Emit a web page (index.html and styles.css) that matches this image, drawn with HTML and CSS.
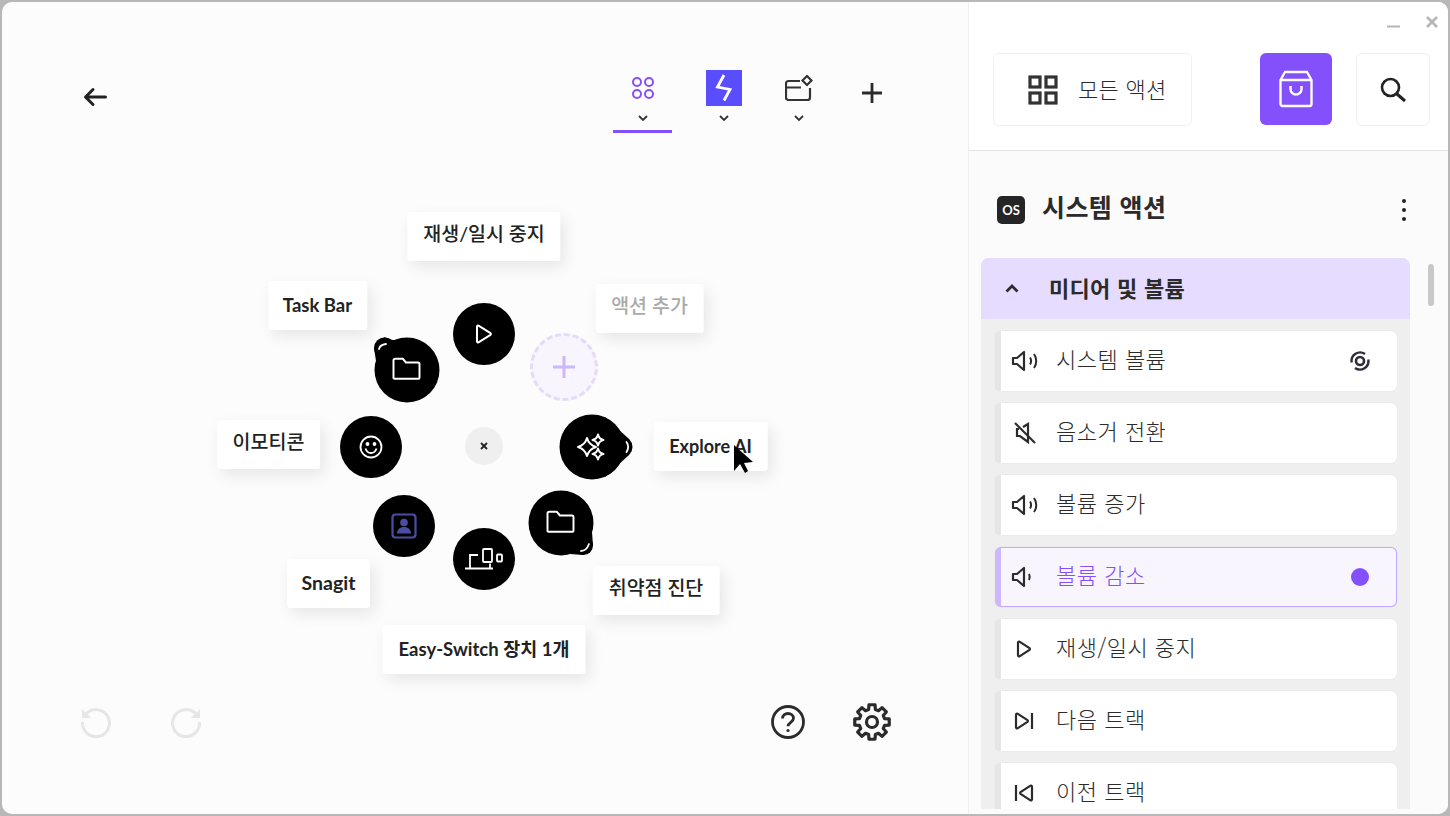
FILE: index.html
```html
<!DOCTYPE html>
<html lang="ko">
<head>
  <meta charset="UTF-8">
  <meta name="viewport" content="width=device-width, initial-scale=1.0">
  <title>액션 링</title>
  <link rel="stylesheet" href="styles.css">
</head>
<body>
  <svg class="defs" width="0" height="0" aria-hidden="true">
    <symbol id="speaker" viewBox="0 0 26 24">
      <path d="M2 9h4l7-6v18l-7-6H2z" fill="none" stroke="currentColor" stroke-width="2.200" stroke-linejoin="round"/>
    </symbol>
    <symbol id="folder" viewBox="0 0 28 24">
      <path d="M2 4a1.500 1.500 0 0 1 1.500-1.500h7l3 3.500h11a1.500 1.500 0 0 1 1.500 1.500v12a1.500 1.500 0 0 1-1.500 1.500h-21A1.500 1.500 0 0 1 2 20.500z" fill="none" stroke="#fff" stroke-width="1.800" stroke-linejoin="round"/>
    </symbol>
  </svg>

  <div class="window">
    <main class="editor">
      <header class="topbar">
        <button class="back" aria-label="뒤로">
          <svg width="24" height="20" viewBox="0 0 24 20"><path d="M22.500 10H2.500M10 2.500L2.500 10l7.500 7.500" fill="none" stroke="#222" stroke-width="3" stroke-linecap="round" stroke-linejoin="round"/></svg>
        </button>
        <div class="tab tab-active">
          <svg width="22" height="22" viewBox="0 0 22 22" fill="none" stroke="#8350fb" stroke-width="2"><circle cx="5" cy="5" r="4"/><circle cx="17" cy="5" r="4"/><circle cx="5" cy="17" r="4"/><circle cx="17" cy="17" r="4"/></svg>
          <svg class="chev" width="10" height="6" viewBox="0 0 10 6"><path d="M1 1l4 4 4-4" fill="none" stroke="#333" stroke-width="1.800"/></svg>
        </div>
        <div class="tab tab-bolt">
          <span class="bolt"><svg width="36" height="36" viewBox="0 0 36 36"><path d="M18 5l-6.500 12 12.500 2.500L18 30.500" fill="none" stroke="#fff" stroke-width="2.800"/></svg></span>
          <svg class="chev" width="10" height="6" viewBox="0 0 10 6"><path d="M1 1l4 4 4-4" fill="none" stroke="#333" stroke-width="1.800"/></svg>
        </div>
        <div class="tab tab-app">
          <svg width="28" height="26" viewBox="0 0 28 26" fill="none" stroke="#333" stroke-width="2.200"><path d="M15 6H3.500A2.500 2.500 0 0 0 1 8.500v14A2.500 2.500 0 0 0 3.500 25h19a2.500 2.500 0 0 0 2.500-2.500V13M1 12.500h15"/><path d="M22 1l4.500 4.500L22 10l-4.500-4.500z"/></svg>
          <svg class="chev" width="10" height="6" viewBox="0 0 10 6"><path d="M1 1l4 4 4-4" fill="none" stroke="#333" stroke-width="1.800"/></svg>
        </div>
        <button class="add-tab" aria-label="추가">
          <svg width="20" height="20" viewBox="0 0 20 20"><path d="M10 0v20M0 10h20" stroke="#2b2b2b" stroke-width="2.800"/></svg>
        </button>
      </header>

      <section class="wheel">
        <span class="label label-ko label-play">재생/일시 중지</span>
        <span class="label label-task">Task Bar</span>
        <span class="label label-ko label-add">액션 추가</span>
        <span class="label label-ko label-emoji">이모티콘</span>
        <span class="label label-ai">Explore AI</span>
        <span class="label label-snagit">Snagit</span>
        <span class="label label-ko label-scan">취약점 진단</span>
        <span class="label label-switch">Easy-Switch 장치 1개</span>

        <span class="node node-play">
          <svg width="18" height="20" viewBox="0 0 18 20"><path d="M2 2.500v15a1 1 0 0 0 1.500.8l12-7.500a1 1 0 0 0 0-1.600l-12-7.500A1 1 0 0 0 2 2.500z" fill="none" stroke="#fff" stroke-width="2"/></svg>
        </span>
        <span class="node node-emoji">
          <svg width="24" height="24" viewBox="0 0 24 24" fill="none" stroke="#fff" stroke-width="1.800"><circle cx="12" cy="12" r="10.500"/><path d="M6.500 13.500c1 3 3 4.500 5.500 4.500s4.500-1.500 5.500-4.500"/><circle cx="8.500" cy="9" r="1" fill="#fff"/><circle cx="15.500" cy="9" r="1" fill="#fff"/></svg>
        </span>
        <span class="node node-person">
          <svg width="26" height="26" viewBox="0 0 26 26"><rect x="1.500" y="1.500" width="23" height="23" rx="3" fill="none" stroke="#4b4da3" stroke-width="2.200"/><circle cx="13" cy="9.500" r="3.800" fill="#4b4da3"/><path d="M6 20.500c0-4 3-6.500 7-6.500s7 2.500 7 6.500z" fill="#4b4da3"/></svg>
        </span>
        <span class="node node-switch">
          <svg width="38" height="22" viewBox="0 0 38 22" fill="none" stroke="#fff" stroke-width="1.800"><path d="M0 20.500h28M5 20.500V7h8M25 20.500v-5"/><rect x="18" y="1" width="9" height="13" rx="1"/><rect x="32" y="6.500" width="5" height="7" rx="1"/></svg>
        </span>

        <svg class="blob blob-folder" width="66" height="68" viewBox="0 0 66 68">
          <circle cx="33" cy="35" r="32.500"/>
          <circle cx="10.500" cy="13" r="10.500"/>
          <path d="M10 2.500C16 2.500 18 7 24 4L2 26 0 13z"/>
          <path d="M5 14c.5-2.500 3-4.500 7-5" fill="none" stroke="#fff" stroke-width="1.800" stroke-linecap="round"/>
          <use href="#folder" x="17" y="21" width="31" height="26"/>
        </svg>
        <svg class="blob blob-ai" width="74" height="66" viewBox="0 0 74 66">
          <circle cx="33" cy="33" r="32.500"/>
          <circle cx="63" cy="33" r="10.500"/>
          <path d="M46 3L70 25 70 41 46 63z"/>
          <path d="M67.500 28c2 3 2 7 0 10" fill="none" stroke="#fff" stroke-width="1.800" stroke-linecap="round"/>
          <path d="M28 24Q30 31 37 33 30 35 28 42 26 35 19 33 26 31 28 24zM39 20.500Q40 25 44.500 26 40 27 39 31.500 38 27 33.500 26 38 25 39 20.500zM39 34.500Q40 39 44.500 40 40 41 39 45.500 38 41 33.500 40 38 39 39 34.500z" fill="none" stroke="#fff" stroke-width="2" stroke-linejoin="round"/>
        </svg>
        <svg class="blob blob-folder2" width="66" height="66" viewBox="0 0 66 66">
          <circle cx="33" cy="33" r="32.500"/>
          <circle cx="55.500" cy="55.500" r="9.500"/>
          <path d="M64 42L65 55.500 55.500 65 42 64z"/>
          <path d="M53 61c3.500 0 6.500-3 8-7" fill="none" stroke="#fff" stroke-width="1.800" stroke-linecap="round"/>
          <use href="#folder" x="17" y="19" width="31" height="26"/>
        </svg>

        <span class="slot">
          <svg width="24" height="24" viewBox="0 0 24 24"><path d="M12 1v22M1 12h22" stroke="#cdb8fb" stroke-width="3"/></svg>
        </span>
        <button class="close-wheel" aria-label="닫기">
          <svg width="8" height="8" viewBox="0 0 8 8"><path d="M1 1l6 6M7 1L1 7" stroke="#222" stroke-width="1.800"/></svg>
        </button>

        <svg class="cursor" width="22" height="30" viewBox="0 0 22 30"><path d="M1 1v26l6-7 5 9 3-2-4-8 9-1z" fill="#000"/></svg>
      </section>

      <footer class="bottombar">
        <svg class="undo" width="32" height="32" viewBox="0 0 32 32" fill="none" stroke="#e6e6e6" stroke-width="3"><path d="M6 8a13.500 13.500 0 1 1-3.500 8"/><path d="M2 3v9h9" fill="#e6e6e6" stroke="none"/></svg>
        <svg class="redo" width="32" height="32" viewBox="0 0 32 32" fill="none" stroke="#e6e6e6" stroke-width="3"><path d="M26 8a13.500 13.500 0 1 0 3.500 8"/><path d="M30 3v9h-9" fill="#e6e6e6" stroke="none"/></svg>
        <svg class="help" width="36" height="36" viewBox="0 0 36 36" fill="none" stroke="#2b2b2b" stroke-width="2.800"><circle cx="18" cy="18" r="15.500"/><path d="M12.500 14.500c0-3 2.500-5 5.500-5s5.500 2 5.500 4.800c0 4-5.500 4-5.500 8"/><circle cx="18" cy="26.500" r="1.600" fill="#2b2b2b" stroke="none"/></svg>
        <svg class="gear" width="40" height="40" viewBox="0 0 40 40" fill="none" stroke="#2b2b2b" stroke-width="3.200" stroke-linejoin="round">
          <g transform="translate(20 20)">
            <polygon points="3.040,-17.230 3.360,-12.560 6.500,-11.260 10.040,-14.340 14.340,-10.040 11.260,-6.500 12.560,-3.360 17.230,-3.040 17.230,3.040 12.560,3.360 11.260,6.500 14.340,10.040 10.040,14.340 6.500,11.260 3.360,12.560 3.040,17.230 -3.040,17.230 -3.360,12.560 -6.500,11.260 -10.040,14.340 -14.340,10.040 -11.260,6.500 -12.560,3.360 -17.230,3.040 -17.230,-3.040 -12.560,-3.360 -11.260,-6.500 -14.340,-10.040 -10.040,-14.340 -6.500,-11.260 -3.360,-12.560 -3.040,-17.230"/>
            <circle r="5.500"/>
          </g>
        </svg>
      </footer>
    </main>

    <aside class="panel">
      <header class="panel-head">
        <div class="win-controls">
          <svg class="win-min" width="16" height="3" viewBox="0 0 16 3"><path d="M0 1.500h13" stroke="#b5b5b5" stroke-width="2"/></svg>
          <svg width="14" height="14" viewBox="0 0 14 14"><path d="M2 2l10 10M12 2L2 12" stroke="#b5b5b5" stroke-width="2.600"/></svg>
        </div>
        <div class="head-row">
          <button class="all-actions">
            <svg width="30" height="30" viewBox="0 0 30 30" fill="none" stroke="#333" stroke-width="3.200"><rect x="2" y="2" width="10" height="10"/><rect x="18" y="2" width="10" height="10"/><rect x="2" y="18" width="10" height="10"/><rect x="18" y="18" width="10" height="10"/></svg>
            <span class="all-actions-text">모든 액션</span>
          </button>
          <button class="shop" aria-label="스토어">
            <svg width="34" height="38" viewBox="0 0 34 38" fill="none" stroke="#fff" stroke-width="2.400" stroke-linejoin="round"><path d="M1.500 10L6 2h22l4.500 8v24a2 2 0 0 1-2 2h-27a2 2 0 0 1-2-2z"/><path d="M1.500 10h31M11.500 16v3a5.500 5.500 0 0 0 11 0v-3"/></svg>
          </button>
          <button class="search" aria-label="검색">
            <svg width="26" height="26" viewBox="0 0 26 26" fill="none" stroke="#222"><circle cx="10.500" cy="10.500" r="8.500" stroke-width="2.600"/><path d="M17 17l8 7" stroke-width="3"/></svg>
          </button>
        </div>
      </header>

      <div class="panel-body">
        <div class="section-title">
          <span class="os-badge">OS</span>
          <h2>시스템 액션</h2>
          <span class="dots"><i></i><i></i><i></i></span>
        </div>

        <div class="accordion">
          <div class="accordion-head">
            <svg width="14" height="9" viewBox="0 0 14 9"><path d="M1.500 7.500L7 2l5.500 5.500" fill="none" stroke="#2b2b2b" stroke-width="2.800"/></svg>
            <span class="accordion-title">미디어 및 볼륨</span>
          </div>
          <ul class="action-list">
            <li class="action">
              <span class="action-icon">
                <svg width="28" height="24" viewBox="0 0 28 24"><use href="#speaker" width="26" height="24"/><path d="M19 8.500c1.300 2 1.300 5 0 7M23 5c3 4 3 10 0 14" fill="none" stroke="currentColor" stroke-width="2"/></svg>
              </span>
              <span class="action-name">시스템 볼륨</span>
              <svg class="dial" width="20" height="20" viewBox="0 0 20 20" fill="none" stroke="#2f2b3a"><circle cx="10" cy="10" r="4" stroke-width="2.600"/><path d="M1.700 11.500A8.500 8.500 0 0 1 15 3.100M18.300 8.500A8.500 8.500 0 0 1 5 16.900" stroke-width="2.400"/></svg>
            </li>
            <li class="action">
              <span class="action-icon">
                <svg width="28" height="24" viewBox="0 0 28 24" fill="none" stroke="currentColor" stroke-width="2.200"><path d="M8 8H6v7h3l8 6V3l-5 3"/><path d="M4 2l20 20"/></svg>
              </span>
              <span class="action-name">음소거 전환</span>
            </li>
            <li class="action">
              <span class="action-icon">
                <svg width="28" height="24" viewBox="0 0 28 24"><use href="#speaker" width="26" height="24"/><path d="M19 8.500c1.300 2 1.300 5 0 7M23 5c3 4 3 10 0 14" fill="none" stroke="currentColor" stroke-width="2"/></svg>
              </span>
              <span class="action-name">볼륨 증가</span>
            </li>
            <li class="action action-active">
              <span class="action-icon">
                <svg width="28" height="24" viewBox="0 0 28 24"><use href="#speaker" width="26" height="24"/><path d="M18 9c.9 1.800.9 4 0 6" fill="none" stroke="currentColor" stroke-width="2"/></svg>
              </span>
              <span class="action-name">볼륨 감소</span>
              <span class="assigned"></span>
            </li>
            <li class="action">
              <span class="action-icon">
                <svg width="28" height="24" viewBox="0 0 28 24"><path d="M7 5.500v13a1 1 0 0 0 1.500.8l10-6.500a1 1 0 0 0 0-1.600l-10-6.500A1 1 0 0 0 7 5.500z" fill="none" stroke="currentColor" stroke-width="2.200"/></svg>
              </span>
              <span class="action-name">재생/일시 중지</span>
            </li>
            <li class="action">
              <span class="action-icon">
                <svg width="28" height="24" viewBox="0 0 28 24" fill="none" stroke="currentColor" stroke-width="2.200"><path d="M5 5.500v13a1 1 0 0 0 1.500.8l10-6.500a1 1 0 0 0 0-1.600l-10-6.500A1 1 0 0 0 5 5.500zM21 4v16"/></svg>
              </span>
              <span class="action-name">다음 트랙</span>
            </li>
            <li class="action">
              <span class="action-icon">
                <svg width="28" height="24" viewBox="0 0 28 24" fill="none" stroke="currentColor" stroke-width="2.200"><path d="M21 5.500v13a1 1 0 0 1-1.500.8l-10-6.500a1 1 0 0 1 0-1.600l10-6.500a1 1 0 0 1 1.500.8zM5 4v16"/></svg>
              </span>
              <span class="action-name">이전 트랙</span>
            </li>
          </ul>
        </div>
        <span class="scroll-thumb"></span>
      </div>
    </aside>
  </div>
</body>
</html>
```

FILE: styles.css
```css
* {
  box-sizing: border-box;
}

html, body {
  height: 100%;
}

body {
  margin: 0;
  padding: 2px;
  background: #b8b8b8;
  font-family: "Noto Sans CJK KR", "Noto Sans", sans-serif;
  color: #2b2b2b;
  overflow: hidden;
}

.defs {
  position: absolute;
}

button {
  border: 0;
  padding: 0;
  background: none;
  font: inherit;
  color: inherit;
}

.window {
  display: flex;
  height: 100%;
  border-radius: 10px;
  overflow: hidden;
  background: #fcfcfc;
}

/* left side: the ring editor */
.editor {
  flex: 1;
  display: flex;
  flex-direction: column;
  min-width: 0;
}

.topbar {
  display: flex;
  align-items: flex-end;
  height: 131px;
  padding-left: 81px;
}

.back {
  display: flex;
  margin: 0 auto 26px 0;
}

.tab {
  display: flex;
  flex-direction: column;
  align-items: center;
  position: relative;
  height: 71px;
}

.tab .chev {
  position: absolute;
  top: 53px;
}

.tab-active {
  width: 59px;
  padding-top: 15px;
  border-bottom: 3px solid #8350fb;
}

.tab-bolt {
  width: 36px;
  margin-left: 34px;
  padding-top: 8px;
}

.bolt {
  display: flex;
  width: 36px;
  height: 36px;
  background: #5a4dff;
}

.tab-app {
  width: 28px;
  margin-left: 43px;
  padding-top: 13px;
}

.add-tab {
  display: flex;
  margin: 0 86px 30px 49px;
}

.wheel {
  position: relative;
  flex: 1;
}

.label {
  position: absolute;
  transform: translateX(-50%);
  height: 49px;
  padding: 0 16px 2px;
  display: flex;
  align-items: center;
  white-space: nowrap;
  background: #fff;
  border-radius: 3px;
  box-shadow: 4px 6px 16px rgba(0, 0, 0, 0.09);
  font-family: "Lato", "Noto Sans CJK KR", sans-serif;
  font-size: 18px;
  font-weight: 700;
  color: #222;
}

.label-ko {
  padding: 0 16px 8px;
  font-size: 19.500px;
  font-weight: 500;
}

.label-play { left: 482px; top: 79px; }
.label-task { left: 315.500px; top: 148px; padding: 0 15px 2px; font-size: 18.500px; }
.label-add { left: 647.500px; top: 151px; color: #aaa; }
.label-emoji { left: 266.500px; top: 287px; }
.label-ai { left: 708.500px; top: 289px; }
.label-snagit { left: 326.500px; top: 426px; padding: 0 15px 2px; font-size: 19.500px; }
.label-scan { left: 654px; top: 433px; }
.label-switch { left: 482px; top: 492px; padding-bottom: 4px; font-size: 18.500px; }

.node {
  position: absolute;
  display: flex;
  align-items: center;
  justify-content: center;
  width: 62px;
  height: 62px;
  border-radius: 50%;
  background: #000;
}

.node-play { left: 451px; top: 170px; }
.node-emoji { left: 338px; top: 283px; }
.node-person { left: 371px; top: 362px; }
.node-switch { left: 451px; top: 395px; }

.blob {
  position: absolute;
  fill: #000;
}

.blob-folder { left: 372px; top: 202px; }
.blob-ai { left: 557px; top: 281px; }
.blob-folder2 { left: 526px; top: 357px; }

.slot {
  position: absolute;
  left: 528px;
  top: 200px;
  width: 68px;
  height: 68px;
  display: flex;
  align-items: center;
  justify-content: center;
  border-radius: 50%;
  border: 3px dashed #e4dbfb;
  background: #f8f5ff;
}

.close-wheel {
  position: absolute;
  left: 463px;
  top: 294px;
  width: 38px;
  height: 38px;
  display: flex;
  align-items: center;
  justify-content: center;
  border-radius: 50%;
  background: #efefef;
}

.cursor {
  position: absolute;
  left: 731px;
  top: 311px;
}

.bottombar {
  display: flex;
  align-items: center;
  height: 76px;
  margin-bottom: 54px;
  padding-left: 78px;
}

.redo {
  margin-left: 58px;
}

.help {
  margin-left: 568px;
}

.gear {
  margin-left: 46px;
}

/* right side: the action panel */
.panel {
  flex: none;
  width: 480px;
  display: flex;
  flex-direction: column;
  border-left: 1px solid #f0f0f0;
  background: #fbfbfb;
}

.panel-head {
  height: 149px;
  background: #fff;
  border-bottom: 1px solid #e4e4e4;
}

.win-controls {
  display: flex;
  justify-content: flex-end;
  align-items: center;
  gap: 22px;
  height: 40px;
  padding: 0 9px 0 0;
}

.win-min {
  margin-top: 8px;
}

.head-row {
  display: flex;
  align-items: flex-start;
  padding: 11px 18px 0 24px;
}

.all-actions {
  display: flex;
  align-items: center;
  gap: 20px;
  width: 199px;
  height: 73px;
  padding-left: 34px;
  border: 1px solid #f0f0f0;
  border-radius: 6px;
}

.all-actions-text {
  padding-bottom: 4px;
  font-size: 22px;
  font-weight: 300;
  letter-spacing: 0.3px;
}

.shop {
  display: flex;
  align-items: center;
  justify-content: center;
  width: 72px;
  height: 72px;
  margin-left: 68px;
  border-radius: 6px;
  background: #8350fb;
}

.search {
  display: flex;
  align-items: center;
  justify-content: center;
  width: 74px;
  height: 73px;
  margin-left: 24px;
  border: 1px solid #f0f0f0;
  border-radius: 6px;
}

.panel-body {
  position: relative;
  height: 658px;
  padding: 0 38px 0 12px;
  overflow: hidden;
}

.section-title {
  display: flex;
  align-items: center;
  height: 107px;
  padding: 10px 0 0 16px;
}

.os-badge {
  display: flex;
  align-items: center;
  justify-content: center;
  width: 28px;
  height: 28px;
  border-radius: 5px;
  background: #252525;
  color: #fff;
  font-family: "Lato", sans-serif;
  font-size: 13px;
  font-weight: 700;
}

.section-title h2 {
  margin: 0 0 7px 17px;
  font-size: 25px;
  font-weight: 700;
  letter-spacing: 0.4px;
}

.dots {
  display: flex;
  flex-direction: column;
  gap: 5px;
  margin-left: auto;
  margin-right: 4px;
}

.dots i {
  width: 4px;
  height: 4px;
  border-radius: 50%;
  background: #222;
}

.accordion {
  border-radius: 8px 8px 0 0;
  background: #efefef;
  overflow: hidden;
}

.accordion-head {
  display: flex;
  align-items: center;
  gap: 30px;
  height: 61px;
  padding-left: 24px;
  background: #e5dcff;
}

.accordion-title {
  padding-bottom: 4px;
  font-size: 22px;
  font-weight: 700;
  letter-spacing: 0.3px;
}

.action-list {
  list-style: none;
  margin: 0;
  padding: 12px 13px 0 14px;
}

.action {
  display: flex;
  align-items: center;
  height: 60px;
  margin-bottom: 12px;
  padding: 0 27px 0 10px;
  border-left: 6px solid #e6e6e6;
  border-radius: 6px;
  background: #fff;
  box-shadow: 0 0 1px rgba(0, 0, 0, 0.12);
}

.action-icon {
  display: flex;
  margin-right: 17px;
}

.action-name {
  flex: 1;
  padding-bottom: 7px;
  font-size: 22px;
  font-weight: 300;
  letter-spacing: 0.5px;
  line-height: 1;
}

.action-active {
  border: 1px solid #c4a8ff;
  border-left: 6px solid #cdb8ff;
  background: #f8f5ff;
}

.action-active .action-name {
  color: #8350fb;
}

.assigned {
  width: 18px;
  height: 18px;
  border-radius: 50%;
  background: #8350fb;
}

.scroll-thumb {
  position: absolute;
  right: 14px;
  top: 113px;
  width: 6px;
  height: 42px;
  border-radius: 3px;
  background: #c8c8c8;
}
```
